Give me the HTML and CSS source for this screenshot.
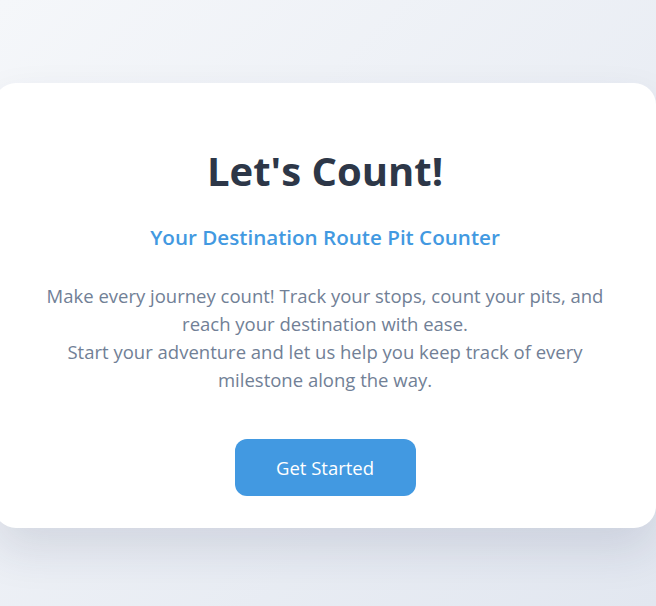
FILE: index.html
```html
<!DOCTYPE html>
<html lang="en">
<head>
<meta charset="UTF-8">
<title>Let's Count!</title>
<link rel="stylesheet" href="styles.css">
</head>
<body>
<main class="page">
  <section class="card">
    <h1 class="title">Let's Count!</h1>
    <h2 class="subtitle">Your Destination Route Pit Counter</h2>
    <p class="intro">Make every journey count! Track your stops, count your pits, and reach your destination with ease.<br>Start your adventure and let us help you keep track of every milestone along the way.</p>
    <button class="cta" type="button">Get Started</button>
  </section>
</main>
</body>
</html>
```

FILE: styles.css
```css
* { box-sizing: border-box; }
html, body { margin: 0; padding: 0; }
body {
  font-family: "Open Sans", "Noto Sans", sans-serif;
  background: linear-gradient(135deg, #f5f7fa 0%, #e2e7f0 100%);
  min-height: 100vh;
  overflow: hidden;
}
.page {
  min-height: 100vh;
  padding-top: 5px;
  display: flex;
  align-items: center;
}
.card {
  width: 662px;
  flex: none;
  margin-left: -6px;
  background: #ffffff;
  border-radius: 22px;
  box-shadow: 0 22px 45px rgba(30, 45, 80, 0.12);
  padding: 64px 40px 32px;
  display: flex;
  flex-direction: column;
  align-items: center;
  text-align: center;
}
.title {
  margin: 0;
  font-size: 40px;
  line-height: 48px;
  font-weight: 700;
  color: #2d3748;
}
.subtitle {
  margin: 27px 0 0;
  font-size: 20.6px;
  line-height: 30px;
  font-weight: 600;
  color: #4299e1;
}
.intro {
  margin: 30px 0 0;
  max-width: 570px;
  font-size: 18.5px;
  line-height: 28px;
  color: #718096;
}
.cta {
  margin-top: 45px;
  width: 181px;
  height: 57px;
  border: none;
  border-radius: 12px;
  background: #4299e1;
  color: #ffffff;
  font-family: inherit;
  font-size: 18.5px;
  font-weight: 500;
}
```
